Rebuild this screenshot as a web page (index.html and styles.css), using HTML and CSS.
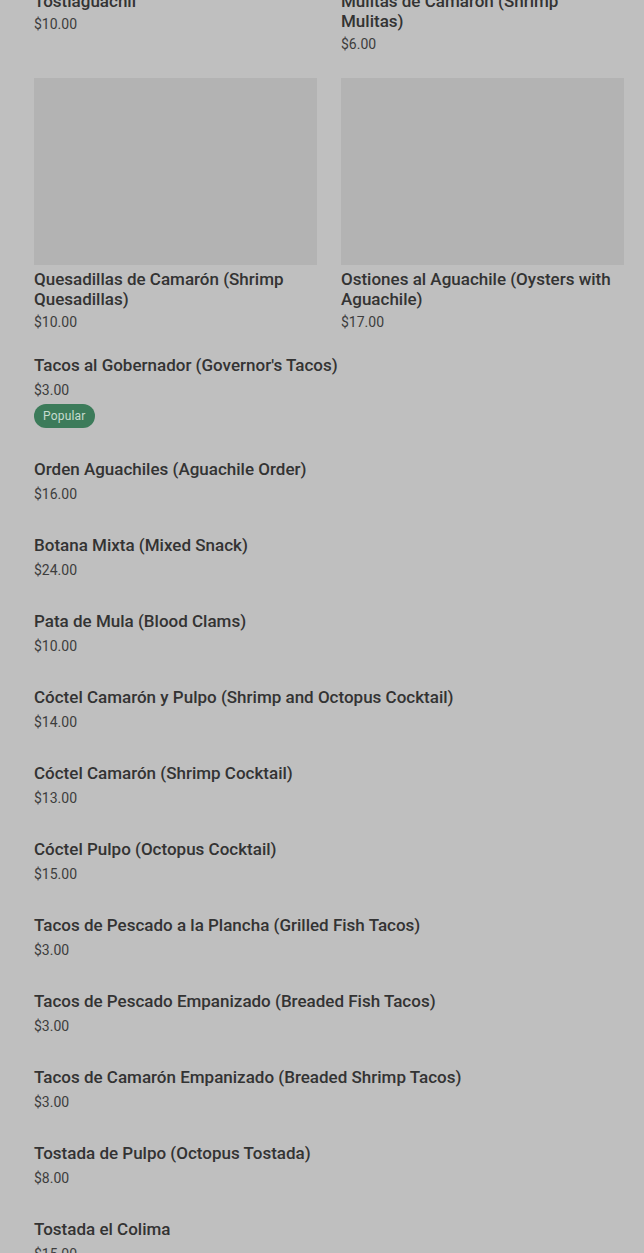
FILE: index.html
```html
<!DOCTYPE html>
<html lang="es">

<head>
    <meta charset="UTF-8">
    <meta name="viewport" content="width=device-width, initial-scale=1.0">
    <title>Menú</title>
    <link rel="stylesheet" href="styles.css">
</head>

<body>
    <div class="menu">
        <div class="grid">
            <div class="card">
                <div class="card-img"></div>
                <div class="item-title">Tostiaguachil</div>
                <div class="item-price">$10.00</div>
            </div>
            <div class="card">
                <div class="card-img"></div>
                <div class="item-title">Mulitas de Camarón (Shrimp Mulitas)</div>
                <div class="item-price">$6.00</div>
            </div>
            <div class="card">
                <div class="card-img"></div>
                <div class="item-title">Quesadillas de Camarón (Shrimp Quesadillas)</div>
                <div class="item-price">$10.00</div>
            </div>
            <div class="card">
                <div class="card-img"></div>
                <div class="item-title">Ostiones al Aguachile (Oysters with Aguachile)</div>
                <div class="item-price">$17.00</div>
            </div>
        </div>

        <div class="list">
            <div class="item">
                <div class="item-title">Tacos al Gobernador (Governor's Tacos)</div>
                <div class="item-price">$3.00</div>
                <span class="badge">Popular</span>
            </div>
            <div class="item">
                <div class="item-title">Orden Aguachiles (Aguachile Order)</div>
                <div class="item-price">$16.00</div>
            </div>
            <div class="item">
                <div class="item-title">Botana Mixta (Mixed Snack)</div>
                <div class="item-price">$24.00</div>
            </div>
            <div class="item">
                <div class="item-title">Pata de Mula (Blood Clams)</div>
                <div class="item-price">$10.00</div>
            </div>
            <div class="item">
                <div class="item-title">Cóctel Camarón y Pulpo (Shrimp and Octopus Cocktail)</div>
                <div class="item-price">$14.00</div>
            </div>
            <div class="item">
                <div class="item-title">Cóctel Camarón (Shrimp Cocktail)</div>
                <div class="item-price">$13.00</div>
            </div>
            <div class="item">
                <div class="item-title">Cóctel Pulpo (Octopus Cocktail)</div>
                <div class="item-price">$15.00</div>
            </div>
            <div class="item">
                <div class="item-title">Tacos de Pescado a la Plancha (Grilled Fish Tacos)</div>
                <div class="item-price">$3.00</div>
            </div>
            <div class="item">
                <div class="item-title">Tacos de Pescado Empanizado (Breaded Fish Tacos)</div>
                <div class="item-price">$3.00</div>
            </div>
            <div class="item">
                <div class="item-title">Tacos de Camarón Empanizado (Breaded Shrimp Tacos)</div>
                <div class="item-price">$3.00</div>
            </div>
            <div class="item">
                <div class="item-title">Tostada de Pulpo (Octopus Tostada)</div>
                <div class="item-price">$8.00</div>
            </div>
            <div class="item">
                <div class="item-title">Tostada el Colima</div>
                <div class="item-price">$15.00</div>
            </div>
        </div>
    </div>
</body>

</html>
```

FILE: styles.css
```css
body {
    font-family: Roboto, "Liberation Sans", sans-serif;
    background-color: #bfbfbf;
    color: #2e2e2e;
    margin: 0;
    padding: 0;
}

.menu {
    padding: 0 20px 40px 34px;
    margin-top: -200px;
}

.grid {
    display: grid;
    grid-template-columns: 1fr 1fr;
    column-gap: 24px;
    row-gap: 24px;
}

.card-img {
    height: 187px;
    background-color: #b3b3b3;
    margin-bottom: 4px;
}

.card .item-title {
    padding-right: 8px;
}

.item-title {
    font-size: 17px;
    font-weight: 500;
    line-height: 20px;
    color: #333333;
}

.item-price {
    font-size: 14px;
    line-height: 20px;
    color: #3d3d3d;
    margin-top: 3px;
}

.list {
    margin-top: 23px;
    display: flex;
    flex-direction: column;
    gap: 31px;
}

.list .item-price {
    margin-top: 5px;
}

.badge {
    display: inline-block;
    margin-top: 4px;
    height: 24px;
    line-height: 24px;
    padding: 0 9px;
    border-radius: 12px;
    background-color: #3c7b5a;
    color: #c6dccf;
    font-size: 12px;
    letter-spacing: 0.2px;
}
```
